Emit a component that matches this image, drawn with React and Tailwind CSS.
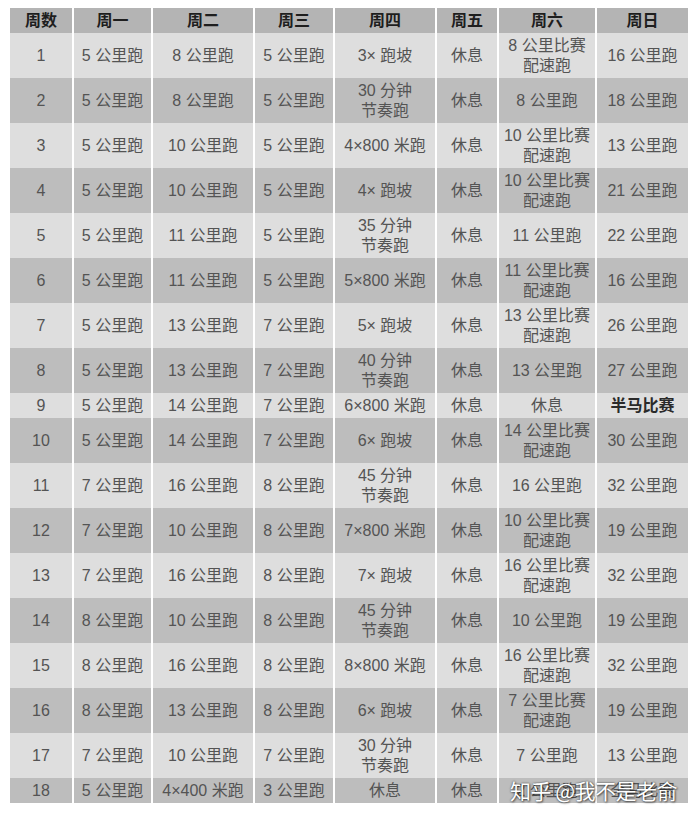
import React from "react";

const headers = ["周数", "周一", "周二", "周三", "周四", "周五", "周六", "周日"];

// 每行: [周数, 周一, ..., 周日]，"\n" 表示换行
const rows = [
  ["1", "5 公里跑", "8 公里跑", "5 公里跑", "3× 跑坡", "休息", "8 公里比赛\n配速跑", "16 公里跑"],
  ["2", "5 公里跑", "8 公里跑", "5 公里跑", "30 分钟\n节奏跑", "休息", "8 公里跑", "18 公里跑"],
  ["3", "5 公里跑", "10 公里跑", "5 公里跑", "4×800 米跑", "休息", "10 公里比赛\n配速跑", "13 公里跑"],
  ["4", "5 公里跑", "10 公里跑", "5 公里跑", "4× 跑坡", "休息", "10 公里比赛\n配速跑", "21 公里跑"],
  ["5", "5 公里跑", "11 公里跑", "5 公里跑", "35 分钟\n节奏跑", "休息", "11 公里跑", "22 公里跑"],
  ["6", "5 公里跑", "11 公里跑", "5 公里跑", "5×800 米跑", "休息", "11 公里比赛\n配速跑", "16 公里跑"],
  ["7", "5 公里跑", "13 公里跑", "7 公里跑", "5× 跑坡", "休息", "13 公里比赛\n配速跑", "26 公里跑"],
  ["8", "5 公里跑", "13 公里跑", "7 公里跑", "40 分钟\n节奏跑", "休息", "13 公里跑", "27 公里跑"],
  ["9", "5 公里跑", "14 公里跑", "7 公里跑", "6×800 米跑", "休息", "休息", "半马比赛"],
  ["10", "5 公里跑", "14 公里跑", "7 公里跑", "6× 跑坡", "休息", "14 公里比赛\n配速跑", "30 公里跑"],
  ["11", "7 公里跑", "16 公里跑", "8 公里跑", "45 分钟\n节奏跑", "休息", "16 公里跑", "32 公里跑"],
  ["12", "7 公里跑", "10 公里跑", "8 公里跑", "7×800 米跑", "休息", "10 公里比赛\n配速跑", "19 公里跑"],
  ["13", "7 公里跑", "16 公里跑", "8 公里跑", "7× 跑坡", "休息", "16 公里比赛\n配速跑", "32 公里跑"],
  ["14", "8 公里跑", "10 公里跑", "8 公里跑", "45 分钟\n节奏跑", "休息", "10 公里跑", "19 公里跑"],
  ["15", "8 公里跑", "16 公里跑", "8 公里跑", "8×800 米跑", "休息", "16 公里比赛\n配速跑", "32 公里跑"],
  ["16", "8 公里跑", "13 公里跑", "8 公里跑", "6× 跑坡", "休息", "7 公里比赛\n配速跑", "19 公里跑"],
  ["17", "7 公里跑", "10 公里跑", "7 公里跑", "30 分钟\n节奏跑", "休息", "7 公里跑", "13 公里跑"],
  ["18", "5 公里跑", "4×400 米跑", "3 公里跑", "休息", "休息", "2 公里跑", "全马比赛"],
];

// 第 9 周和第 18 周是矮行
const shortRows = ["9", "18"];

export default function App() {
  return (
    <div className="w-[698px] h-[817px] bg-white pl-[10px] pt-[8px] font-['Liberation_Sans','Noto_Sans_CJK_SC',sans-serif]">
      <div className="relative w-[678px]">
        <div className="grid grid-cols-[62px_77px_100px_78px_100px_60px_96px_91px] gap-x-[2px]">
          {headers.map((h) => (
            <div
              key={h}
              className="h-[25px] bg-[#b4b4b4] flex items-center justify-center text-[16px] font-bold text-[#1e1e1e]"
            >
              {h}
            </div>
          ))}
          {rows.map((row, ri) => {
            const light = ri % 2 === 0;
            const short = shortRows.includes(row[0]);
            return row.map((cell, ci) => (
              <div
                key={ri + "-" + ci}
                className={
                  "flex flex-col items-center justify-center text-center text-[16px] leading-[20px] " +
                  (short ? "h-[25px] " : "h-[45px] ") +
                  (light ? "bg-[#dedede] " : "bg-[#bdbdbd] ") +
                  (cell === "半马比赛" ? "font-bold text-[#2a2a2a]" : "text-[#545454]")
                }
              >
                {cell.split("\n").map((line, li) => (
                  <span key={li}>{line}</span>
                ))}
              </div>
            ));
          })}
        </div>

        {/* 水印 */}
        <div className="absolute left-[500px] bottom-[-1px] text-[21px] leading-[28px] text-white tracking-[-0.5px] font-['Noto_Sans_CJK_SC',sans-serif] [text-shadow:0_0_2px_rgba(0,0,0,0.7),1px_1px_2px_rgba(0,0,0,0.5)]">
          知乎 @我不是老俞
        </div>
      </div>
    </div>
  );
}
